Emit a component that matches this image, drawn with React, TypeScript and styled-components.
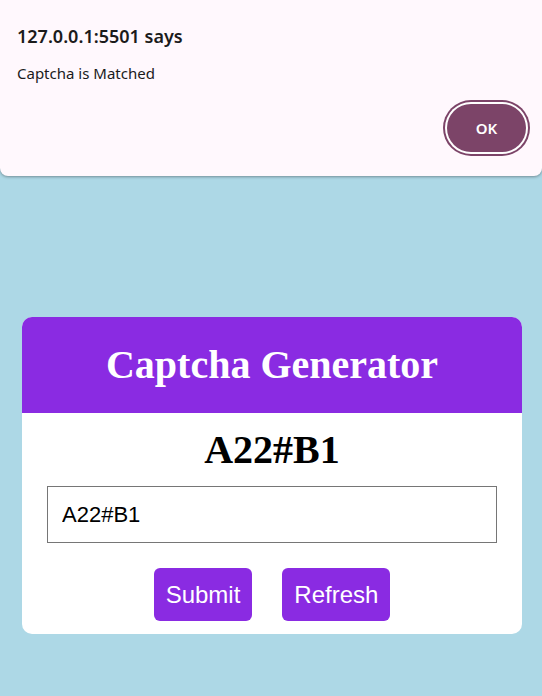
import React from "react";
import styled, { createGlobalStyle } from "styled-components";

const Global = createGlobalStyle`
  html, body { margin: 0; padding: 0; }
  body {
    background: #add8e6;
    font-family: "Liberation Sans", Arial, sans-serif;
    min-height: 696px;
  }
`;

const Page = styled.div`
  position: relative;
  min-height: 696px;
  display: flex;
  justify-content: center;
  align-items: flex-start;
  padding: 317px 0 0 2px;
  box-sizing: border-box;
`;

const Card = styled.div`
  width: 500px;
  background: #ffffff;
  border-radius: 10px;
  overflow: hidden;
  padding-bottom: 13px;
`;

const Header = styled.div`
  background: #8a2be2;
  height: 96px;
  display: flex;
  align-items: center;
  justify-content: center;
`;

const Title = styled.h1`
  margin: 0;
  color: #ffffff;
  font-family: "Liberation Serif", "Times New Roman", serif;
  font-weight: bold;
  font-size: 40px;
  line-height: 46px;
`;

const Body = styled.div`
  display: flex;
  flex-direction: column;
  align-items: center;
  padding: 0 25px;
`;

const Code = styled.h2`
  margin: 14px 0 13px;
  font-family: "Liberation Serif", "Times New Roman", serif;
  font-weight: bold;
  font-size: 40px;
  line-height: 46px;
  color: #000;
`;

const Input = styled.input`
  width: 450px;
  height: 57px;
  box-sizing: border-box;
  border: 1px solid #767676;
  padding: 0 14px;
  font-family: "Liberation Sans", Arial, sans-serif;
  font-size: 22px;
  color: #000;
  outline: none;
`;

const Buttons = styled.div`
  display: flex;
  gap: 30px;
  margin-top: 25px;
`;

const Button = styled.button`
  background: #8a2be2;
  color: #ffffff;
  border: none;
  border-radius: 6px;
  height: 53px;
  padding: 0 12px;
  font-family: "Liberation Sans", Arial, sans-serif;
  font-size: 24px;
  cursor: pointer;
`;

const Dialog = styled.div`
  position: absolute;
  top: 0;
  left: 0;
  right: 0;
  height: 176px;
  background: #fff8fd;
  border-radius: 0 0 8px 8px;
  box-shadow: 0 1px 3px rgba(0, 0, 0, 0.35);
  box-sizing: border-box;
  padding: 24px 12px 0 17px;
  display: flex;
  flex-direction: column;
  font-family: "Noto Sans", "Open Sans", sans-serif;
  color: #1b1b1b;
`;

const DialogTitle = styled.div`
  font-size: 18px;
  font-weight: 600;
  line-height: 24px;
`;

const DialogMessage = styled.div`
  font-size: 15px;
  line-height: 20px;
  margin-top: 15px;
`;

const DialogActions = styled.div`
  display: flex;
  justify-content: flex-end;
  margin-top: 21px;
`;

const OkButton = styled.button`
  width: 79px;
  height: 48px;
  border-radius: 24px;
  background: #7c4468;
  color: #ffffff;
  border: none;
  box-shadow: 0 0 0 2px #ffffff, 0 0 0 4px #7c4468;
  font-family: "Noto Sans", "Open Sans", sans-serif;
  font-weight: 600;
  font-size: 15px;
  margin-right: 4px;
`;

export default function App() {
  return (
    <>
      <Global />
      <Page>
        <Card>
          <Header>
            <Title>Captcha Generator</Title>
          </Header>
          <Body>
            <Code>A22#B1</Code>
            <Input defaultValue="A22#B1" />
            <Buttons>
              <Button>Submit</Button>
              <Button>Refresh</Button>
            </Buttons>
          </Body>
        </Card>
        <Dialog>
          <DialogTitle>127.0.0.1:5501 says</DialogTitle>
          <DialogMessage>Captcha is Matched</DialogMessage>
          <DialogActions>
            <OkButton>OK</OkButton>
          </DialogActions>
        </Dialog>
      </Page>
    </>
  );
}
